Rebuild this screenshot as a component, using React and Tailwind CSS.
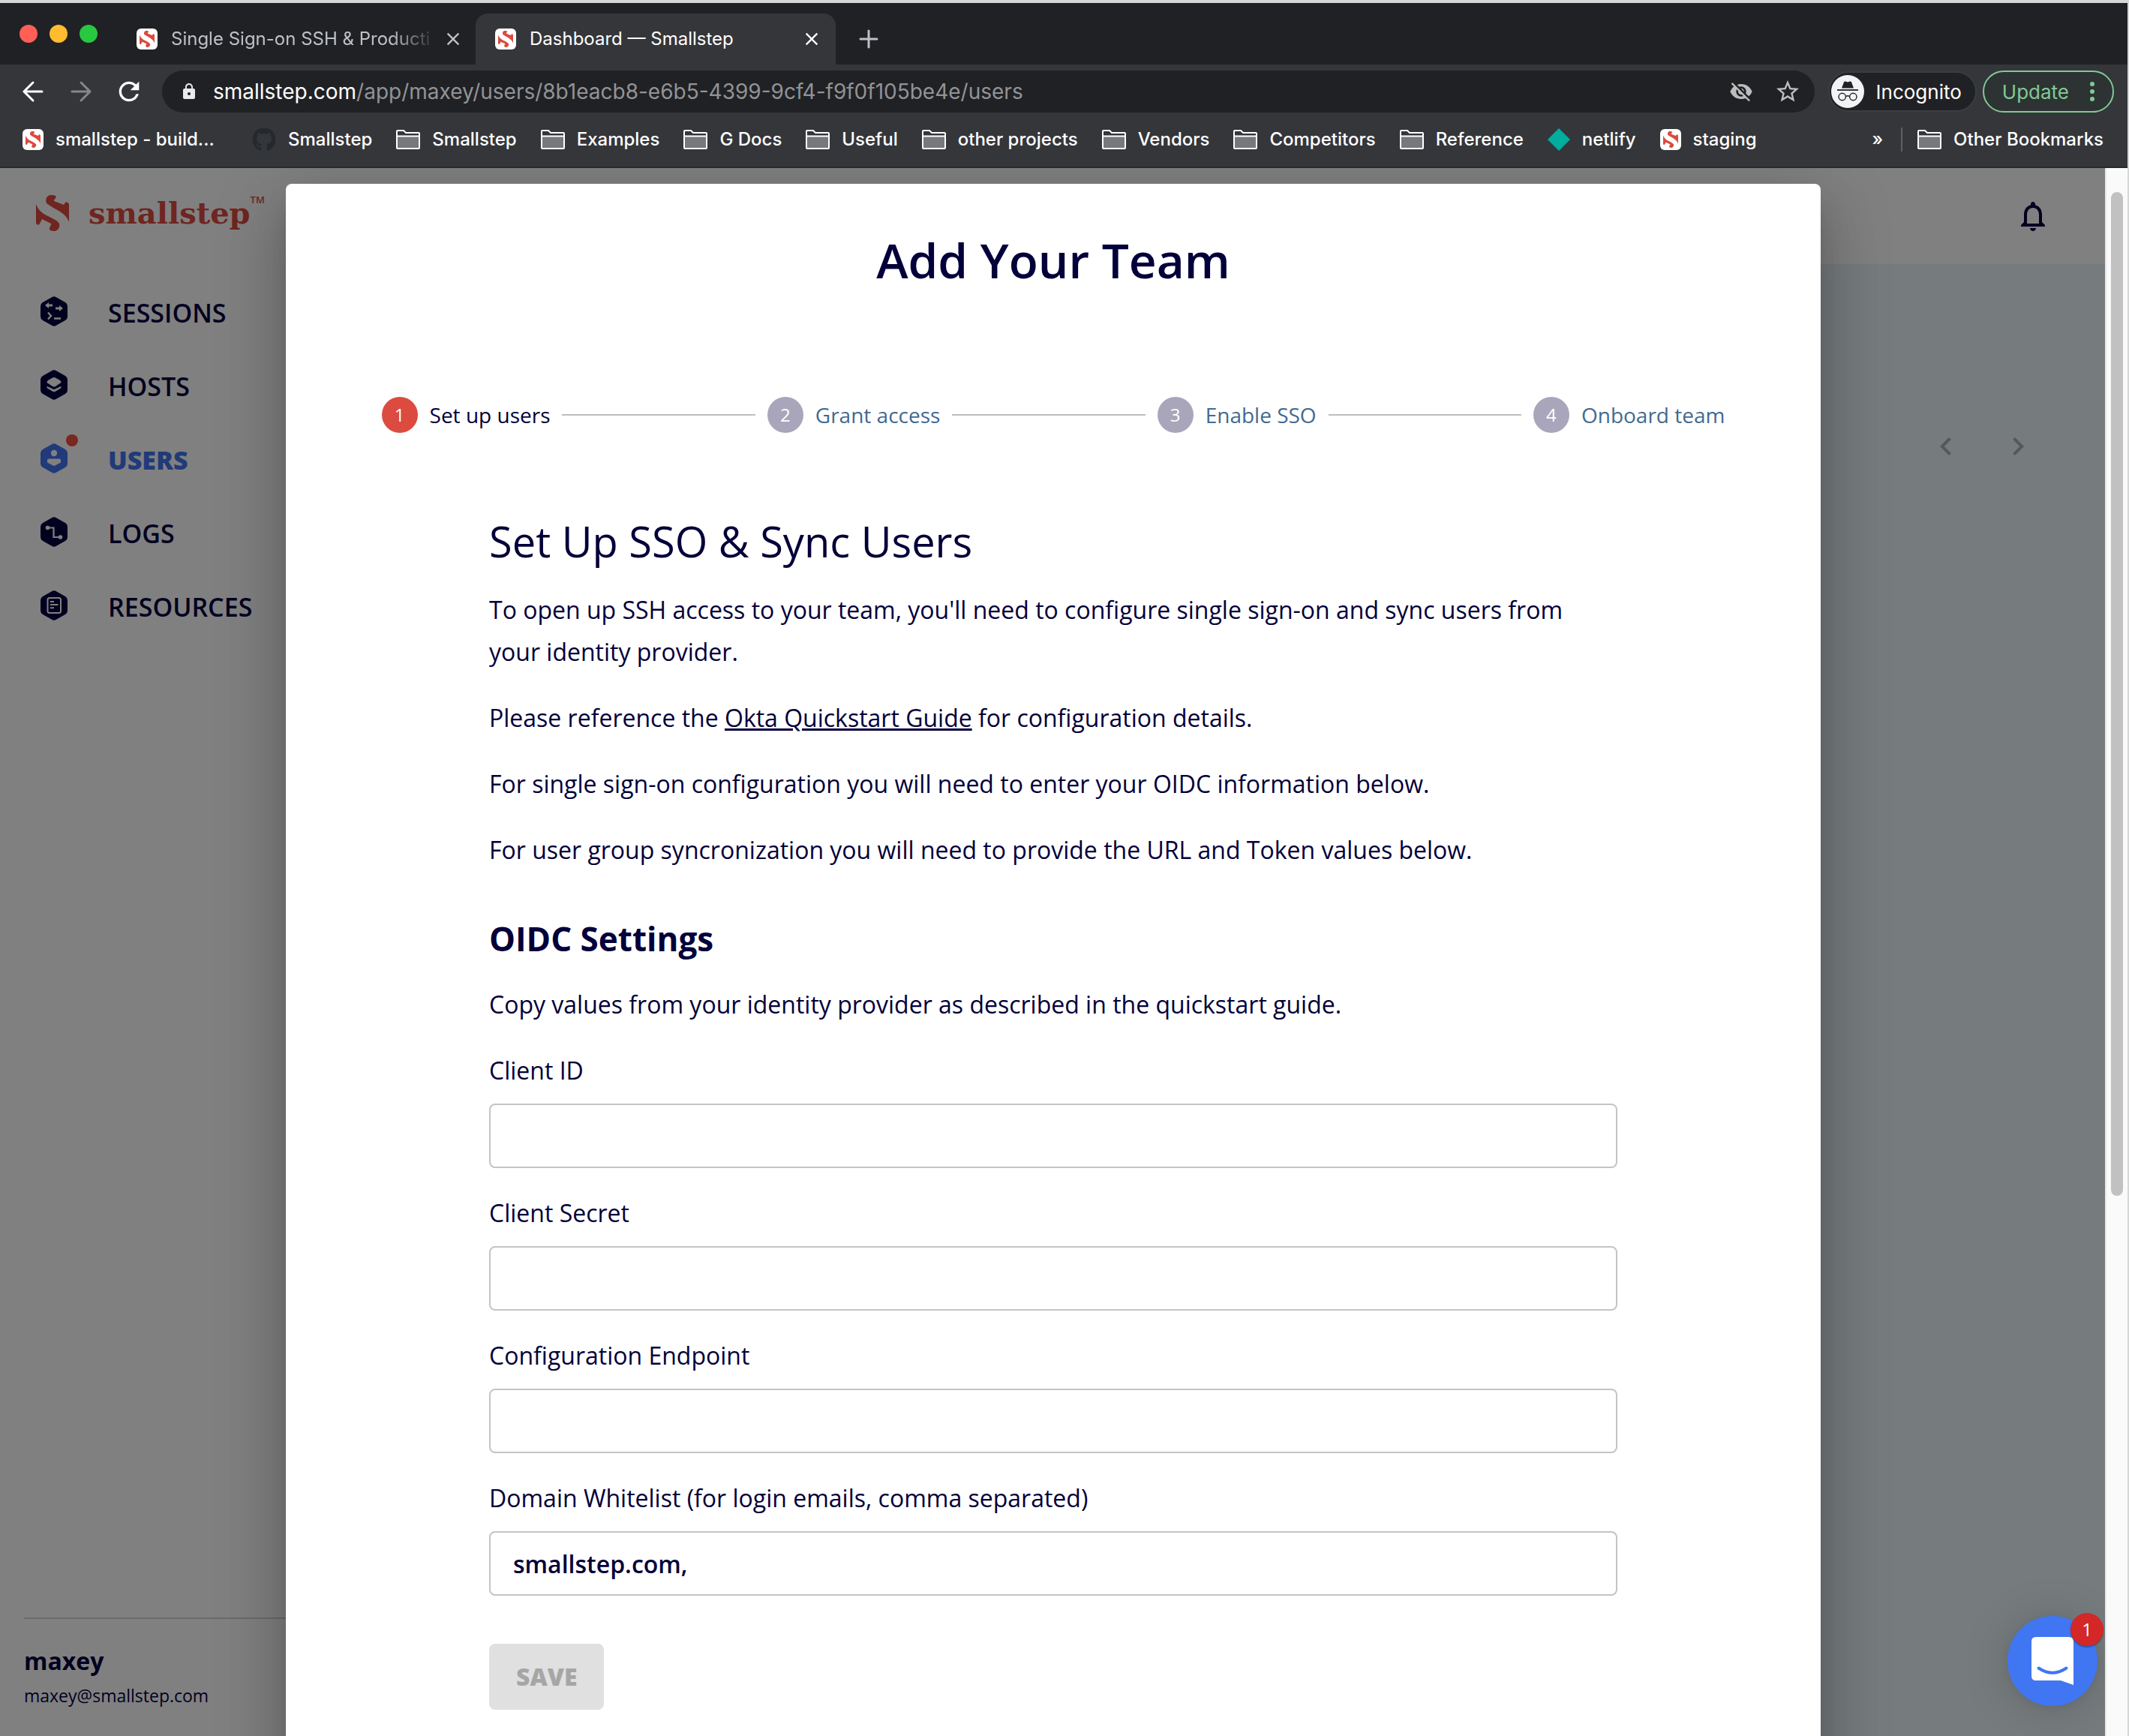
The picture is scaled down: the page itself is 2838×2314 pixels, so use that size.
import {
  MdRefresh,
  MdLock,
  MdClose,
  MdStarBorder,
  MdVisibilityOff,
  MdNotificationsNone,
  MdChevronLeft,
  MdChevronRight,
} from "react-icons/md";
import { FaGithub } from "react-icons/fa";

const MARK =
  "M20 0C14 0 12 6 14 11C22 17 30 20 36 25C41 29 43 33 44 36V12C42 9 40 8.500 39 10L37 13L24 8C23.500 6 26 5 27 2C25 0 22 0 20 0ZM0 12V38C2 40 4 40 5 38L8 32L20 38C21 40 17 43 18 46C20 48 23 48 25 48C30 47 32 42 31 38C28 33 19 30 12 26C5 22 2 17 0 12Z";

function Mark({ className }) {
  return (
    <svg viewBox="0 0 44 48" className={className} fill="currentColor" aria-hidden="true">
      <path d={MARK} />
    </svg>
  );
}

function Favicon() {
  return (
    <span className="flex size-7 shrink-0 items-center justify-center rounded-md bg-white text-[#dc4a3f]">
      <Mark className="h-[22px] w-5" />
    </span>
  );
}

function Folder() {
  return (
    <svg viewBox="0 0 32 26" className="h-[26px] w-8 shrink-0" aria-hidden="true">
      <path d="M1 24V1.500H11L14 5H31V24Z" fill="#35363a" />
      <path d="M2 9H30V24H2Z" fill="#77787b" />
      <path
        d="M1 24V2Q1 1 2 1H10L13 4H30Q31 4 31 5V24Q31 25 30 25H2Q1 25 1 24ZM1 8.500H31"
        fill="none"
        stroke="#fff"
        strokeWidth="2"
      />
    </svg>
  );
}

function Netlify() {
  return (
    <svg viewBox="0 0 30 30" className="size-[30px] shrink-0" aria-hidden="true">
      <path d="M15 0L30 15L15 30L0 15Z" fill="#00ad9f" />
    </svg>
  );
}

function Arrow({ d }) {
  return (
    <svg viewBox="0 0 40 40" className="size-10" fill="none" stroke="currentColor" strokeWidth="3" strokeLinecap="round" aria-hidden="true">
      <path d={d} />
    </svg>
  );
}

const bookmarks = [
  ["fav", "smallstep - build..."],
  ["github", "Smallstep"],
  ["folder", "Smallstep"],
  ["folder", "Examples"],
  ["folder", "G Docs"],
  ["folder", "Useful"],
  ["folder", "other projects"],
  ["folder", "Vendors"],
  ["folder", "Competitors"],
  ["folder", "Reference"],
  ["netlify", "netlify"],
  ["fav", "staging"],
];

function Bookmark({ kind, label }) {
  return (
    <a href="#" className="flex items-center gap-4 whitespace-nowrap first:min-w-[274px]">
      {kind === "fav" && <Favicon />}
      {kind === "github" && <FaGithub className="size-8 text-[#24292e]" />}
      {kind === "folder" && <Folder />}
      {kind === "netlify" && <Netlify />}
      {label}
    </a>
  );
}

function TabStrip() {
  return (
    <div className="flex h-[82px] items-end bg-[#202124] pl-[26px]">
      <div className="flex h-full items-center gap-4">
        <span className="size-6 rounded-full bg-[#ff5f57]" />
        <span className="size-6 rounded-full bg-[#febc2e]" />
        <span className="size-6 rounded-full bg-[#28c840]" />
      </div>
      <div className="ml-[52px] flex h-[68px] w-[452px] items-center gap-[18px] pr-4 text-[#bdc1c6]">
        <Favicon />
        <span className="-mr-3 flex-1 whitespace-nowrap [mask-image:linear-gradient(to_right,black_82%,transparent)]">
          Single Sign-on SSH &amp; Producti
        </span>
        <button aria-label="Close tab">
          <MdClose className="size-7" />
        </button>
      </div>
      <div className="flex h-[68px] w-[480px] items-center gap-[18px] rounded-t-2xl bg-[#35363a] pr-[18px] pl-[26px] text-white">
        <Favicon />
        <span className="flex-1 whitespace-nowrap">Dashboard — Smallstep</span>
        <button aria-label="Close tab">
          <MdClose className="size-7" />
        </button>
      </div>
      <button aria-label="New tab" className="ml-6 flex h-[68px] items-center text-[#bdc1c6]">
        <Arrow d="M9 20H31M20 9V31" />
      </button>
    </div>
  );
}

function Incognito() {
  return (
    <svg viewBox="0 0 44 44" className="size-11" aria-hidden="true">
      <circle cx="22" cy="22" r="22" fill="#f1f3f4" />
      <path d="M14 17.500L17 9.500Q17.500 8 19 8.500L22 9.500L25 8.500Q26.500 8 27 9.500L30 17.500Z" fill="#202124" />
      <path d="M8 20H36" stroke="#202124" strokeWidth="1.800" />
      <circle cx="14.700" cy="29" r="4.700" fill="none" stroke="#202124" strokeWidth="1.400" />
      <circle cx="29.300" cy="29" r="4.700" fill="none" stroke="#202124" strokeWidth="1.400" />
      <path d="M19.400 28.500Q22 27 24.600 28.500" fill="none" stroke="#202124" strokeWidth="1.400" />
    </svg>
  );
}

function Toolbar() {
  return (
    <div className="flex h-[72px] items-center pr-[18px] pl-6 text-[28px] text-white">
      <button aria-label="Back">
        <Arrow d="M32 20H8M20 8L8 20L20 32" />
      </button>
      <button aria-label="Forward" className="ml-6 text-[#85868a]">
        <Arrow d="M8 20H32M20 8L32 20L20 32" />
      </button>
      <button aria-label="Reload" className="ml-6">
        <MdRefresh className="size-10" />
      </button>
      <div className="ml-6 flex h-14 flex-1 items-center rounded-full bg-[#202124] pr-[18px] pl-6">
        <MdLock className="size-6 text-[#e8eaed]" />
        <span className="ml-5 flex-1 whitespace-nowrap text-[#929396]">
          <span className="text-white">smallstep.com</span>/app/maxey/users/8b1eacb8-e6b5-4399-9cf4-f9f0f105be4e/users
        </span>
        <button aria-label="Tracking blocked" className="text-[#bdbdbd]">
          <MdVisibilityOff className="size-8" />
        </button>
        <button aria-label="Bookmark this page" className="ml-7 text-[#bdbdbd]">
          <MdStarBorder className="size-9" />
        </button>
      </div>
      <div className="ml-[18px] flex h-[54px] items-center gap-4 rounded-full border-2 border-[#3c3d41] bg-[#202124] pr-[18px] pl-[2px] text-[26px]">
        <Incognito />
        Incognito
      </div>
      <button className="ml-2 flex h-14 items-center gap-7 rounded-full border-2 border-[#81c995] bg-[#2d3233] pr-6 pl-6 text-[26px] text-[#81c995]">
        Update
        <span className="flex flex-col gap-1">
          <span className="size-[6px] rounded-full bg-[#81c995]" />
          <span className="size-[6px] rounded-full bg-[#81c995]" />
          <span className="size-[6px] rounded-full bg-[#81c995]" />
        </span>
      </button>
    </div>
  );
}

function BookmarksBar() {
  return (
    <div className="flex h-[66px] items-center border-b-2 border-[#28292c] pr-8 pb-2 pl-[30px] font-medium text-white">
      <nav className="flex flex-1 items-center gap-8">
        {bookmarks.map(([kind, label], i) => (
          <Bookmark key={i} kind={kind} label={label} />
        ))}
      </nav>
      <button className="mr-6" aria-label="More bookmarks">
        »
      </button>
      <span className="mr-5 h-8 w-[2px] bg-[#5f6064]" />
      <Bookmark kind="folder" label="Other Bookmarks" />
    </div>
  );
}

const HEX =
  "M15 1.200Q18 -0.600 21 1.200L33 8Q36 9.800 36 13V27Q36 30.200 33 32L21 38.800Q18 40.600 15 38.800L3 32Q0 30.200 0 27V13Q0 9.800 3 8Z";

const glyphs = {
  sessions: (
    <>
      <path d="M6 12L11 8V10.500H16V13.500H11V16ZM30 16L25 12V14.500H20V17.500H25V20Z" fill="#808080" />
      <path d="M10 21.500L14 26L10 30.500M18 29.500H27" fill="none" stroke="#808080" strokeWidth="2.400" />
    </>
  ),
  hosts: (
    <>
      <path d="M8.500 17Q8.500 15 10 14L16 10.500Q18 9.500 20 10.500L26 14Q27.500 15 27.500 17L20 22Q18 23 16 22Z" fill="#808080" />
      <path d="M9 22.500V24L16.500 28.500Q18 29.300 19.500 28.500L27 24V22.500L19.500 26Q18 26.800 16.500 26Z" fill="#808080" stroke="#808080" strokeWidth="1" />
    </>
  ),
  users: (
    <>
      <circle cx="18" cy="13" r="4.200" fill="#808080" />
      <path d="M11 20.500H25Q27 20.500 27 22.500V25.500L19.500 29.500Q18 30.300 16.500 29.500L9 25.500V22.500Q9 20.500 11 20.500Z" fill="#808080" />
    </>
  ),
  logs: (
    <>
      <circle cx="9.500" cy="14.500" r="2.800" fill="#808080" />
      <circle cx="26.500" cy="27" r="2.800" fill="#808080" />
      <path d="M10 14.500H17.500V27H26" fill="none" stroke="#808080" strokeWidth="2.200" />
    </>
  ),
  resources: (
    <>
      <rect x="9.500" y="10" width="17.500" height="20" rx="2.500" fill="none" stroke="#808080" strokeWidth="2" />
      <path d="M13 15H18M13 19H23.500M13 23.200H18" stroke="#808080" strokeWidth="2" />
    </>
  ),
};

const nav = [
  ["sessions", "SESSIONS"],
  ["hosts", "HOSTS"],
  ["users", "USERS"],
  ["logs", "LOGS"],
  ["resources", "RESOURCES"],
];

function Sidebar() {
  return (
    <aside className="flex w-[400px] shrink-0 flex-col bg-[#808080] text-[#02001f]">
      <a href="#" className="flex h-[120px] items-center pl-12 text-[#6f2520]">
        <Mark className="h-12 w-11" />
        <span className="ml-[26px] font-['DejaVu_Serif',serif] text-[40px] leading-none font-bold">smallstep</span>
        <span className="mb-9 text-[13px] leading-none font-semibold">TM</span>
      </a>
      <nav className="mt-6 flex flex-col">
        {nav.map(([id, label]) => (
          <a
            key={id}
            href="#"
            className={
              id === "users"
                ? "flex h-[98px] items-center gap-[54px] pl-[54px] text-[34px] font-extrabold text-[#213a7a]"
                : "flex h-[98px] items-center gap-[54px] pl-[54px] text-[34px] font-semibold"
            }
          >
            <span className="relative mb-1">
              <svg viewBox="0 0 36 40" className="h-10 w-9" fill="currentColor" aria-hidden="true">
                <path d={HEX} />
                {glyphs[id]}
              </svg>
              {id === "users" && <span className="absolute -top-3 -right-[14px] size-4 rounded-full bg-[#7b2620]" />}
            </span>
            {label}
          </a>
        ))}
      </nav>
      <div className="mt-auto ml-8 flex flex-col gap-1 border-t-2 border-[#6b6b6b] pt-8 pb-9">
        <strong className="text-[32px] leading-[48px] font-bold">maxey</strong>
        <span className="text-[23px] leading-9">maxey@smallstep.com</span>
      </div>
    </aside>
  );
}

const steps = ["Set up users", "Grant access", "Enable SSO", "Onboard team"];

function Stepper() {
  return (
    <ol className="flex items-center gap-4 px-32 text-[28px]">
      {steps.map((label, i) => (
        <li key={label} className={i === 0 ? "contents text-[#030039]" : "contents text-[#426a90]"}>
          {i > 0 && <span className="h-[2px] flex-1 bg-[#bdbdbd]" />}
          <span
            className={
              i === 0
                ? "flex size-12 items-center justify-center rounded-full bg-[#dc4b40] text-2xl text-white"
                : "flex size-12 items-center justify-center rounded-full bg-[#a9a6bb] text-2xl text-white"
            }
          >
            {i + 1}
          </span>
          <span className="whitespace-nowrap">{label}</span>
        </li>
      ))}
    </ol>
  );
}

const fields = [
  ["client-id", "Client ID", ""],
  ["client-secret", "Client Secret", ""],
  ["endpoint", "Configuration Endpoint", ""],
  ["whitelist", "Domain Whitelist (for login emails, comma separated)", "smallstep.com,"],
];

function Modal() {
  return (
    <section
      role="dialog"
      aria-labelledby="dialog-title"
      className="mx-auto mt-[21px] w-[73%] rounded-t-lg bg-white pb-32 text-[#030039] shadow-[0_22px_30px_-14px_rgba(0,0,0,0.2),0_48px_76px_6px_rgba(0,0,0,0.14),0_18px_92px_16px_rgba(0,0,0,0.12)]"
    >
      <h1 id="dialog-title" className="pt-[54px] text-center text-[64px] leading-[96px] font-semibold">
        Add Your Team
      </h1>
      <div className="mt-[134px]">
        <Stepper />
      </div>
      <div className="mx-auto mt-[104px] w-[1504px] max-w-full text-[32px] leading-[56px]">
        <h2 className="text-[56px] leading-[80px]">Set Up SSO &amp; Sync Users</h2>
        <div className="mt-6 flex flex-col gap-8">
          <p>
            To open up SSH access to your team, you'll need to configure single sign-on and sync users from your
            identity provider.
          </p>
          <p>
            Please reference the{" "}
            <a href="#" className="underline">
              Okta Quickstart Guide
            </a>{" "}
            for configuration details.
          </p>
          <p>For single sign-on configuration you will need to enter your OIDC information below.</p>
          <p>For user group syncronization you will need to provide the URL and Token values below.</p>
        </div>
        <h3 className="mt-[62px] text-[44px] leading-[56px] font-bold">OIDC Settings</h3>
        <p className="mt-8">Copy values from your identity provider as described in the quickstart guide.</p>
        <form className="mt-8 flex flex-col items-start gap-8">
          {fields.map(([id, label, value]) => (
            <div key={id} className="flex w-full flex-col gap-4">
              <label htmlFor={id}>{label}</label>
              <input
                id={id}
                defaultValue={value}
                className="h-[86px] w-full rounded-lg border-2 border-[#c4c4c4] px-[30px] font-semibold"
              />
            </div>
          ))}
          <button
            type="button"
            className="mt-8 h-[88px] rounded-lg bg-[#e0e0e0] px-9 text-[32px] font-extrabold text-[#a6a6a6]"
          >
            SAVE
          </button>
        </form>
      </div>
    </section>
  );
}

function ChatLauncher() {
  return (
    <button
      aria-label="Open chat"
      className="absolute right-[10px] bottom-10 size-[120px] rounded-full bg-[#4076f1] shadow-[0_2px_12px_rgba(0,0,0,0.06),0_4px_64px_rgba(0,0,0,0.16)]"
    >
      <svg viewBox="0 0 120 120" className="size-full" aria-hidden="true">
        <path d="M38 28H82Q88 28 88 34V92L71 86H38Q32 86 32 80V34Q32 28 38 28Z" fill="#fff" />
        <path d="M41.500 69.500Q60 82 78.500 69.500" fill="none" stroke="#4076f1" strokeWidth="4" strokeLinecap="round" />
      </svg>
      <span className="absolute -top-1 -right-2 flex size-11 items-center justify-center rounded-full bg-[#d32728] text-2xl text-white shadow-[0_2px_2px_rgba(0,0,0,0.3)]">
        1
      </span>
    </button>
  );
}

export default function App() {
  return (
    <div className="flex h-screen flex-col overflow-hidden border-t-4 border-r-2 border-[#d4d7d6] bg-[#35363a] font-['Open_Sans',sans-serif]">
      <header className="shrink-0 font-[Inter,sans-serif] text-[24px]">
        <TabStrip />
        <Toolbar />
        <BookmarksBar />
      </header>
      <div className="flex min-h-0 flex-1">
        <div className="relative grid min-w-0 flex-1 grid-cols-1 grid-rows-[100%] overflow-hidden">
          <div className="col-start-1 row-start-1 flex">
            <Sidebar />
            <main className="flex-1 bg-[#767b7e]">
              <div className="flex h-32 items-center justify-end bg-[#808080] pr-[72px] text-[#02001f]">
                <button aria-label="Notifications">
                  <MdNotificationsNone className="size-12" />
                </button>
              </div>
              <div className="mt-[219px] flex justify-end gap-12 pr-[92px] text-[#55585a]">
                <button aria-label="Previous page">
                  <MdChevronLeft className="size-12" />
                </button>
                <button aria-label="Next page">
                  <MdChevronRight className="size-12" />
                </button>
              </div>
            </main>
          </div>
          <div className="relative col-start-1 row-start-1 pl-[2px]">
            <Modal />
          </div>
          <ChatLauncher />
        </div>
        <div className="w-[30px] border-l-2 border-[#e8e8e8] bg-[#fafafa] pt-8 pl-[6px]">
          <div className="h-[65%] w-4 rounded-full bg-[#c1c1c1]" />
        </div>
      </div>
    </div>
  );
}
